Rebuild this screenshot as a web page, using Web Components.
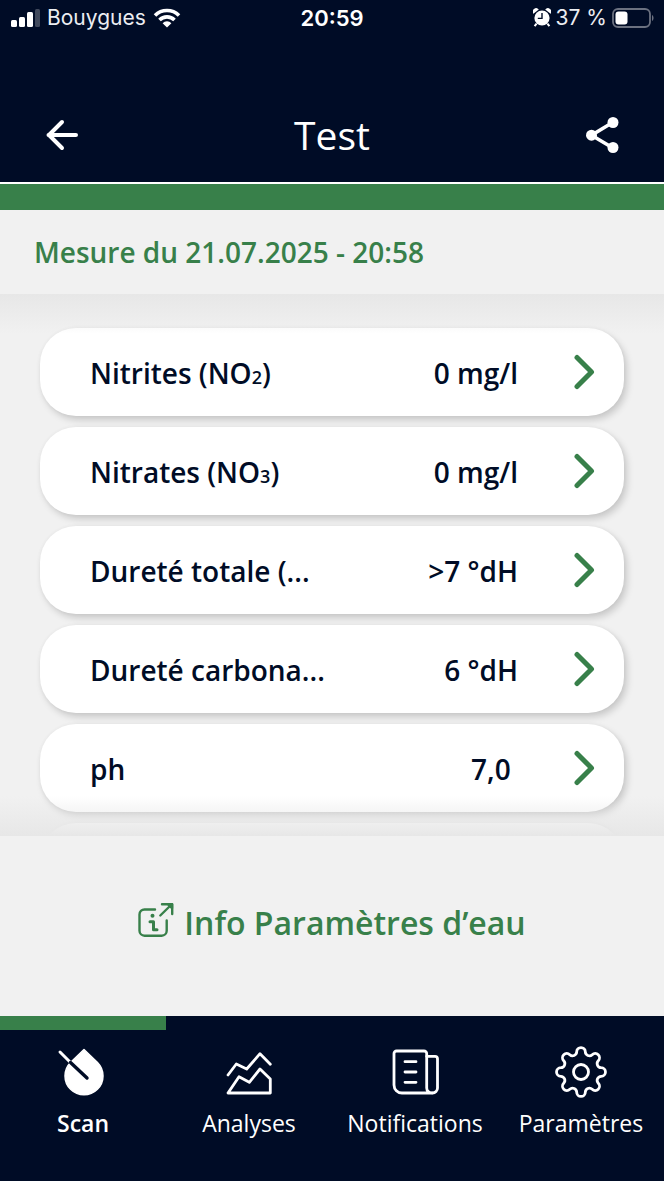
<!DOCTYPE html>
<html lang="fr">
<head>
<meta charset="utf-8">
<meta name="viewport" content="width=device-width, initial-scale=1">
<title>Test</title>
<style>
  :root { --navy: #000c26; --green: #38804a; --paper: #f1f1f1; }
  html, body { margin: 0; height: 100%; }
  body { font-family: "Open Sans", "Noto Sans", sans-serif; background: var(--paper); color: var(--navy); }
</style>
</head>
<body>
<water-app></water-app>
<script>
const define = (name, html) => {
  const template = document.createElement('template');
  template.innerHTML = html;
  customElements.define(name, class extends HTMLElement {
    constructor() {
      super();
      this.attachShadow({ mode: 'open' }).append(template.content.cloneNode(true));
    }
  });
};

define('status-bar', `
<style>
  :host { display: grid; grid-template-columns: 1fr auto 1fr; align-items: center; height: 36px; padding: 0 10px; color: #eceef2; font: 400 21px/36px Inter, sans-serif; }
  div { display: flex; align-items: center; gap: 7px; }
  .right { justify-content: flex-end; gap: 5px; }
  time { font-weight: 600; font-size: 22px; color: #fff; }
  svg { display: block; flex: none; }
</style>
<div>
  <svg width="30" height="20" viewBox="0 0 30 20" fill="#fff" aria-hidden="true">
    <rect x="1" y="12" width="6" height="7" rx="1.5"/><rect x="9" y="9" width="6" height="10" rx="1.5"/>
    <rect x="17" y="4" width="6" height="15" rx="1.5"/><rect x="25" y="1" width="5" height="18" rx="1.5" opacity=".25"/>
  </svg>
  <span>Bouygues</span>
  <svg width="28" height="20" viewBox="0 0 28 20" fill="none" stroke="#fff" stroke-width="3.6" aria-hidden="true">
    <path d="M2 7.4a17 17 0 0 1 24 0"/><path d="M6.5 12a10.6 10.6 0 0 1 15 0"/><path d="M14 19.6l-4.4-4.4a6.2 6.2 0 0 1 8.8 0z" fill="#fff" stroke="none"/>
  </svg>
</div>
<time>20:59</time>
<div class="right">
  <svg width="18" height="20" viewBox="0 0 18 20" aria-hidden="true">
    <g fill="#fff"><circle cx="9" cy="10" r="7.6"/><path d="M0.4 5.8A3.4 3.4 0 0 1 5.8 1.6zM17.6 5.8A3.4 3.4 0 0 0 12.2 1.6z"/></g>
    <path d="M3.6 15.6l-2 2.6M14.4 15.6l2 2.6" stroke="#fff" stroke-width="2"/>
    <path d="M9 5v5.4H4.8" fill="none" stroke="#000c26" stroke-width="1.4"/>
  </svg>
  <span>37 %</span>
  <svg width="42" height="20" viewBox="0 0 42 20" aria-hidden="true">
    <rect x="1" y="1" width="37" height="18" rx="5" fill="none" stroke="#6b7180" stroke-width="1.8"/>
    <rect x="3.5" y="3.5" width="12" height="13" rx="3" fill="#fff"/><path d="M40 7c2 1 2 5 0 6z" fill="#6b7180"/>
  </svg>
</div>`);

define('title-bar', `
<style>
  :host { display: flex; align-items: center; justify-content: space-between; padding: 0 40px 22px; color: #fff; }
  h1 { margin: 0; font-weight: 400; font-size: 39px; line-height: 50px; }
  button { all: unset; display: block; cursor: pointer; }
  svg { display: block; }
</style>
<button type="button" aria-label="Retour"><svg width="44" height="44" viewBox="0 0 44 44" fill="none" stroke="#fff" stroke-width="4" stroke-linecap="round" stroke-linejoin="round"><path d="M36 22H8.5M22 9L9 22l13 13"/></svg></button>
<h1><slot></slot></h1>
<button type="button" aria-label="Partager"><svg width="44" height="44" viewBox="0 0 44 44"><path d="M33 9.300L11.500 22.200L33 35" fill="none" stroke="#fff" stroke-width="3.600"/><g fill="#fff"><circle cx="33" cy="9.500" r="5.500"/><circle cx="11.500" cy="22.200" r="5.500"/><circle cx="33" cy="34.500" r="5.500"/></g></svg></button>`);

define('measure-row', `
<style>
  :host { display: block; }
  a { display: flex; align-items: center; box-sizing: border-box; height: 88px; padding: 0 29px 0 50px; border-radius: 36px; background: #fff; box-shadow: 3px 4px 7px rgba(0,0,0,.17), 0 0 4px rgba(0,0,0,.04); color: var(--navy); text-decoration: none; font-weight: 600; font-size: 28px; line-height: 38px; }
  .name { flex: 1; min-width: 0; padding-top: 2px; }
  .value { white-space: pre; padding: 2px 55px 0 0; }
  svg { flex: none; }
</style>
<a href="#"><span class="name"><slot></slot></span><span class="value"><slot name="value"></slot></span>
<svg width="22" height="36" viewBox="0 0 22 36" fill="none" stroke="#38804a" stroke-width="5" stroke-linecap="round" stroke-linejoin="round" aria-hidden="true"><path d="M4 3.500L18.500 18L4 32.500"/></svg></a>`);

define('measure-list', `
<style>
  :host { display: block; position: relative; flex: 1 1 0; min-height: 0; overflow: hidden; }
  .scroll { display: flex; flex-direction: column; gap: 11px; box-sizing: border-box; height: 100%; padding: 34px 40px; overflow-y: auto; scrollbar-width: none; }
  ::slotted(*) { flex: none; }
  :host::before, :host::after { content: ""; position: absolute; left: 0; right: 0; height: 40px; z-index: 1; pointer-events: none; }
  :host::before { top: 0; background: linear-gradient(#e7e7e7, rgba(241,241,241,0)); }
  :host::after { bottom: 0; background: linear-gradient(rgba(238,238,238,0), #e7e7e7); }
</style>
<div class="scroll"><slot></slot></div>`);

define('info-link', `
<style>
  :host { display: flex; justify-content: center; padding: 64px 20px 70px; }
  a { display: flex; align-items: center; gap: 10px; color: var(--green); text-decoration: none; font-weight: 600; font-size: 32px; line-height: 46px; }
  svg { display: block; flex: none; margin-bottom: 6px; }
</style>
<a href="#"><svg width="36" height="36" viewBox="0 0 36 36" fill="none" stroke="#38804a" stroke-width="2.400" stroke-linecap="round" stroke-linejoin="round" aria-hidden="true">
<path d="M17 7.500H6.500a5 5 0 0 0-5 5V28.700a5 5 0 0 0 5 5H23.700a5 5 0 0 0 5-5V18.500M22.300 13.500L33 3"/><path d="M24 2.200H34.200V12"/><path d="M30 2.200h4v4z" fill="#38804a"/><path d="M12 19.700h3.500v8M15.500 27.700h3.500" stroke-width="3"/><circle cx="14.500" cy="13.700" r="2" fill="#38804a" stroke="none"/></svg><slot></slot></a>`);

define('nav-item', `
<style>
  :host { display: block; flex: 1 1 0; min-width: 0; border-top: 14px solid transparent; }
  :host([active]) { border-color: var(--green); font-weight: 600; }
  a { display: flex; flex-direction: column; align-items: center; gap: 9px; padding: 16px 0 42px; color: #fff; text-decoration: none; font-size: 23px; line-height: 32px; }
</style>
<a href="#"><slot name="icon"></slot><span><slot></slot></span></a>`);

define('water-app', `
<style>
  :host { display: flex; flex-direction: column; height: 100vh; }
  header { background: var(--navy); border-bottom: 2px solid #fff; }
  title-bar { padding-top: 74px; }
  .band { height: 26px; background: var(--green); }
  h2 { margin: 0; padding: 23px 34px; color: var(--green); font-weight: 600; font-size: 28px; line-height: 38px; }
  .sub { font-size: 18px; line-height: 1; }
  nav { display: flex; background: var(--navy); }
  .icon { display: block; width: 52px; height: 52px; fill: none; stroke: #fff; stroke-width: 2.8; stroke-linecap: round; stroke-linejoin: round; }
</style>
<header>
  <status-bar></status-bar>
  <title-bar>Test</title-bar>
</header>
<div class="band"></div>
<h2>Mesure du 21.07.2025 - 20:58</h2>
<measure-list>
  <measure-row>Nitrites (NO<span class="sub">2</span>)<span slot="value">0 mg/l</span></measure-row>
  <measure-row>Nitrates (NO<span class="sub">3</span>)<span slot="value">0 mg/l</span></measure-row>
  <measure-row>Dureté totale (...<span slot="value">&gt;7 °dH</span></measure-row>
  <measure-row>Dureté carbona...<span slot="value">6 °dH</span></measure-row>
  <measure-row>ph<span slot="value">7,0 </span></measure-row>
  <measure-row></measure-row>
</measure-list>
<info-link>Info Paramètres d’eau</info-link>
<nav>
  <nav-item active>
    <svg slot="icon" class="icon" viewBox="0 0 52 52" aria-hidden="true"><path d="M27 3.500L40.500 16.500A19 19 0 1 1 13.500 16.500Z" fill="#fff" stroke-width="1.500"/><path d="M3 6L13 16" stroke-width="3"/><path d="M13.500 16.500L30 32" stroke="#000c26" stroke-width="3.400"/></svg>Scan
  </nav-item>
  <nav-item>
    <svg slot="icon" class="icon" viewBox="0 0 52 52" aria-hidden="true"><path d="M5 29L13.300 18L23.700 23L37 7.700L47.300 18.300"/><path d="M5 47L16 30.700L26.300 36.300L37 23L47.300 33V47Z"/></svg>Analyses
  </nav-item>
  <nav-item>
    <svg slot="icon" class="icon" viewBox="0 0 52 52" aria-hidden="true"><path d="M7.500 5H35a2.700 2.700 0 0 1 2.700 2.700V42a5 5 0 0 0 5.200 5H13a8 8 0 0 1-8-8V7.500A2.500 2.500 0 0 1 7.500 5Z"/><path d="M37.700 10.300H46a2.500 2.500 0 0 1 2.500 2.500V42a5 5 0 0 1-5 5M16 15.700H27M16 26H27M16 36.300H27"/></svg>Notifications
  </nav-item>
  <nav-item>
    <svg slot="icon" class="icon" viewBox="-26 -26 52 52" aria-hidden="true"><circle r="7.500"/><path d="M20.170-4.300A4.300 4.300 0 0 1 20.170 4.300A4.100 4.100 0 0 0 17.300 11.220A4.300 4.300 0 0 1 11.220 17.300A4.100 4.100 0 0 0 4.300 20.170A4.300 4.300 0 0 1-4.300 20.170A4.100 4.100 0 0 0-11.220 17.300A4.300 4.300 0 0 1-17.300 11.220A4.100 4.100 0 0 0-20.170 4.300A4.300 4.300 0 0 1-20.170-4.300A4.100 4.100 0 0 0-17.300-11.220A4.300 4.300 0 0 1-11.220-17.300A4.100 4.100 0 0 0-4.300-20.170A4.300 4.300 0 0 1 4.300-20.170A4.100 4.100 0 0 0 11.220-17.300A4.300 4.300 0 0 1 17.300-11.220A4.100 4.100 0 0 0 20.170-4.300Z"/></svg>Paramètres
  </nav-item>
</nav>`);
</script>
</body>
</html>
